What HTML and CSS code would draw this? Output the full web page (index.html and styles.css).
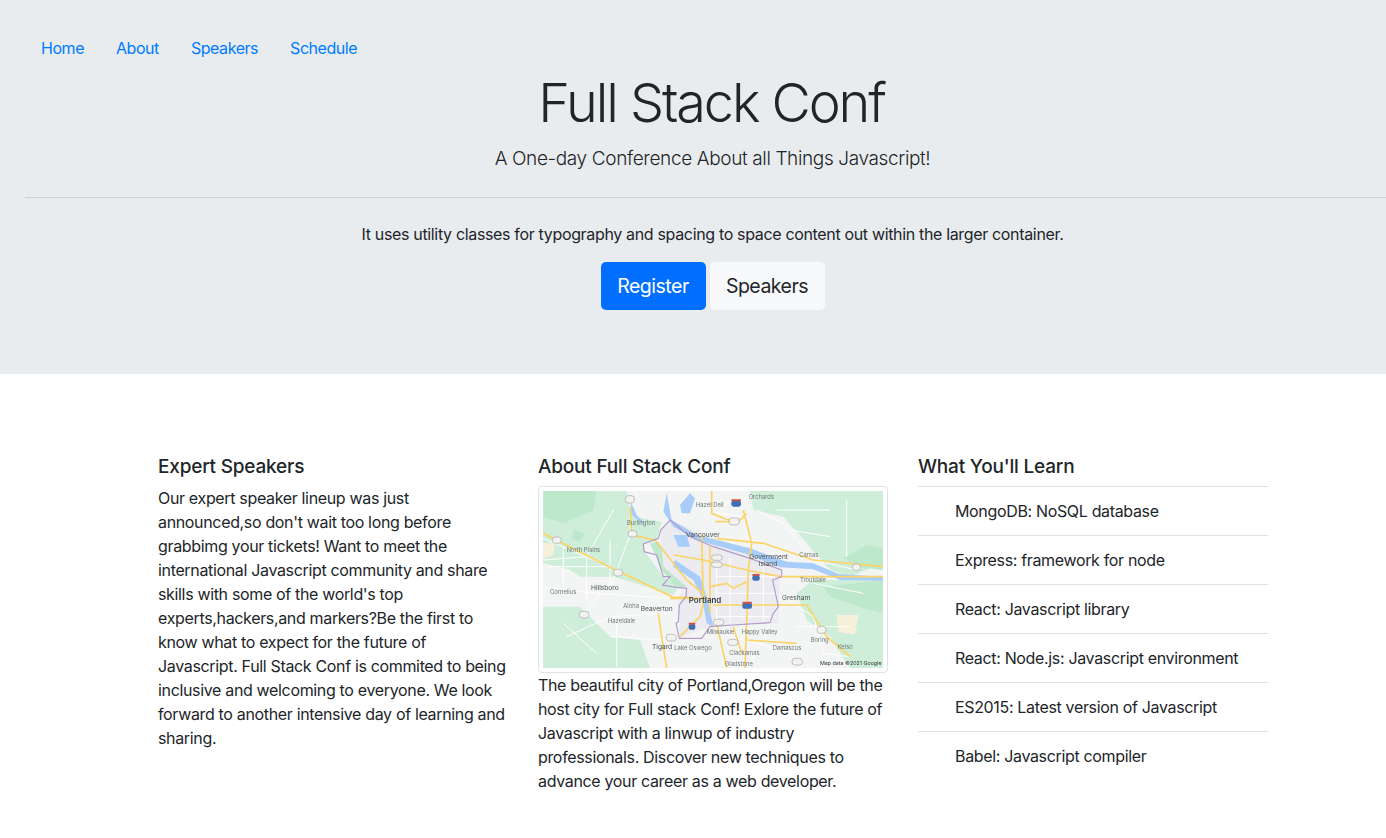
FILE: index.html
```html
<!DOCTYPE html>
<html lang="en">
<head>
<meta charset="utf-8">
<title>Full Stack Conf</title>
<link rel="stylesheet" href="styles.css">
</head>
<body>
<header class="hero">
  <nav class="nav">
    <a href="#">Home</a>
    <a href="#">About</a>
    <a href="#">Speakers</a>
    <a href="#">Schedule</a>
  </nav>
  <div class="hero-body">
    <h1>Full Stack Conf</h1>
    <p class="lead">A One-day Conference About all Things Javascript!</p>
    <hr class="rule">
    <p class="note">It uses utility classes for typography and spacing to space content out within the larger container.</p>
    <div class="actions">
      <a class="btn btn-primary" href="#">Register</a>
      <a class="btn btn-light" href="#">Speakers</a>
    </div>
  </div>
</header>
<main class="columns">
  <section>
    <h2>Expert Speakers</h2>
    <p>Our expert speaker lineup was just announced,so don't wait too long before grabbimg your tickets! Want to meet the international Javascript community and share skills with some of the world's top experts,hackers,and markers?Be the first to know what to expect for the future of Javascript. Full Stack Conf is commited to being inclusive and welcoming to everyone. We look forward to another intensive day of learning and sharing.</p>
  </section>
  <section>
    <h2>About Full Stack Conf</h2>
    <div class="thumb">
      <svg class="map" viewBox="39 33 1020 531" role="img" aria-label="Map of Portland, Oregon">
        <rect x="39" y="33" width="1020" height="531" fill="#f3f4f4"/>
        <g fill="#cfeeda">
          <path d="M39 33H290L310 110L395 125L380 180L340 190L345 215L400 290L445 320L430 345L250 290L150 290L120 270L39 250Z"/>
          <path d="M660 33H1059V250L960 290L900 270L830 190L760 110L670 90Z"/>
          <path d="M850 300H1059V564H960L900 470L830 420L800 340Z"/>
          <path d="M39 380H150L240 470L330 480L360 564H39Z"/>
        </g>
        <g fill="#bde8cb">
          <path d="M940 235L1010 195L1059 205V270L990 262Z"/>
          <path d="M360 190L385 185L440 275L470 320L440 325L395 270Z"/>
          <path d="M130 150L165 160L150 185L125 175Z"/>
          <path d="M880 320L1059 300V400L1000 385L900 350Z"/>
          <path d="M480 195L505 190L510 220L485 215Z"/>
          <path d="M705 380L735 380L730 405L705 400Z"/>
          <path d="M610 340L625 340L625 360L610 360Z"/>
          <path d="M40 33H200L190 90L100 130L40 110Z"/>
        </g>
        <path d="M39 190H75L70 225L39 235Z" fill="#f6efd9"/>
        <path d="M920 405H985L975 465L925 455Z" fill="#f6efd9"/>
        <path d="M390 150L430 125L650 210L750 270L745 430L540 440L450 470L445 350L470 320L400 260Z" fill="#ebebf0"/>
        <g fill="#a9cdf9">
          <path d="M450 75L480 40L495 55L480 100L455 100Z"/>
          <path d="M410 40L425 120L500 165L660 205L770 245L850 250L925 282L1059 290V302L930 300L850 268L750 262L650 222L500 180L430 140L400 95Z"/>
          <path d="M430 165L470 165L480 200L445 200Z"/>
          <path d="M435 240L510 290L530 350L550 440L530 430L515 350L490 300L430 260Z"/>
          <path d="M300 60L320 105L345 130L335 130L305 105Z"/>
        </g>
        <g fill="none" stroke="#fff" stroke-width="3">
          <path d="M39 175L250 265L430 355"/>
          <path d="M39 320L200 340L420 355"/>
          <path d="M160 400L250 300L300 165L300 60"/>
          <path d="M250 90L170 230L40 240"/>
          <path d="M680 90L760 130L850 240L980 270"/>
          <path d="M760 350L850 410L880 520L960 530"/>
          <path d="M740 380L700 480L650 564"/>
          <path d="M240 470L400 480L520 470"/>
          <path d="M110 470L240 410L420 400"/>
          <path d="M600 60L560 100L640 110"/>
          <path d="M850 310L1000 340"/>
          <path d="M600 470L800 520"/>
          <path d="M100 200V320M170 230V360M240 180V330M60 260H240"/>
          <path d="M560 240V430M600 230V430M700 260V425M560 290H740M560 340H740M560 410H740"/>
          <path d="M780 150L900 170M740 90L900 90M950 60V230"/>
          <path d="M100 430L200 520M260 430V560M800 440H960"/>
        </g>
        <g fill="none" stroke="#fcd465" stroke-width="5">
          <path d="M39 160L240 262L430 352L480 352"/>
          <path d="M300 80L305 165L375 180L470 300L525 345"/>
          <path d="M545 33L545 100L620 130L650 100"/>
          <path d="M555 125L620 125"/>
          <path d="M640 90L665 190L655 270L650 430L645 564"/>
          <path d="M430 225L520 240L650 270L750 290L1059 290"/>
          <path d="M515 165L520 370L510 410L450 470"/>
          <path d="M540 200L540 400"/>
          <path d="M540 320L590 310L610 325L650 305"/>
          <path d="M550 375H750L830 375L890 470L960 530"/>
          <path d="M560 175L700 190L850 240L1059 260"/>
          <path d="M385 400L395 470L410 564"/>
          <path d="M560 430L590 564"/>
          <path d="M610 440L635 520"/>
          <path d="M645 480L800 490"/>
          <path d="M420 355H530"/>
        </g>
        <path d="M421 120L392 150L385 175L340 192L342 215L380 225L400 290L420 290L398 315L440 322L470 325L468 350L448 375L445 425L438 430L448 475L515 475L540 440L610 435L720 428L730 400L745 380L728 300L755 290L755 270L660 235L550 200L480 170Z" fill="none" stroke="#b39acb" stroke-width="3.5"/>
        <g class="map-label">
          <text x="656" y="58">Orchards</text>
          <text x="498" y="82">Hazel Dell</text>
          <text x="291" y="135">Burlington</text>
          <text x="110" y="216">North Plains</text>
          <text x="60" y="342">Cornelius</text>
          <text x="280" y="385">Aloha</text>
          <text x="234" y="429">Hazeldale</text>
          <text x="808" y="232">Camas</text>
          <text x="810" y="307">Troutdale</text>
          <text x="530" y="461">Milwaukie</text>
          <text x="635" y="462">Happy Valley</text>
          <text x="433" y="511">Lake Oswego</text>
          <text x="598" y="525">Clackamas</text>
          <text x="585" y="558">Gladstone</text>
          <text x="728" y="509">Damascus</text>
          <text x="842" y="487">Boring</text>
          <text x="923" y="506">Kelso</text>
        </g>
        <g class="map-label map-label-big">
          <text x="468" y="170">Vancouver</text>
          <text x="183" y="331">Hillsboro</text>
          <text x="332" y="393">Beaverton</text>
          <text x="756" y="359">Gresham</text>
          <text x="366" y="507">Tigard</text>
          <text x="658" y="237">Government</text>
          <text x="686" y="257">Island</text>
        </g>
        <text class="map-city" x="476" y="368">Portland</text>
        <g fill="#3f6fb5">
          <rect x="604" y="62" width="29" height="18" rx="7"/>
          <rect x="667" y="286" width="22" height="16" rx="6"/>
          <rect x="637" y="369" width="29" height="17" rx="6"/>
          <rect x="476" y="432" width="20" height="17" rx="6"/>
        </g>
        <g fill="#c9534a">
          <rect x="604" y="58" width="29" height="6" rx="2"/>
          <rect x="667" y="282" width="22" height="6" rx="2"/>
          <rect x="637" y="365" width="29" height="6" rx="2"/>
          <rect x="476" y="428" width="20" height="6" rx="2"/>
        </g>
        <g fill="#f2f2ee" stroke="#a8a8a8" stroke-width="2">
          <rect x="286" y="47" width="27" height="22" rx="9"/>
          <rect x="597" y="114" width="31" height="21" rx="9"/>
          <rect x="294" y="152" width="27" height="19" rx="9"/>
          <rect x="67" y="171" width="27" height="19" rx="9"/>
          <rect x="251" y="268" width="27" height="20" rx="9"/>
          <rect x="148" y="394" width="29" height="20" rx="9"/>
          <rect x="408" y="463" width="31" height="20" rx="9"/>
          <rect x="967" y="252" width="25" height="19" rx="9"/>
          <rect x="861" y="439" width="27" height="21" rx="9"/>
          <rect x="593" y="478" width="31" height="18" rx="9"/>
          <rect x="786" y="535" width="31" height="20" rx="9"/>
          <rect x="550" y="418" width="31" height="18" rx="9"/>
          <rect x="545" y="225" width="31" height="16" rx="7"/>
          <rect x="545" y="246" width="31" height="16" rx="7"/>
        </g>
        <text class="map-credit" x="870" y="556">Map data ©2021 Google</text>
      </svg>
    </div>
    <p>The beautiful city of Portland,Oregon will be the host city for Full stack Conf! Exlore the future of Javascript with a linwup of industry professionals. Discover new techniques to advance your career as a web developer.</p>
  </section>
  <section>
    <h2>What You'll Learn</h2>
    <ul class="topics">
      <li>MongoDB: NoSQL database</li>
      <li>Express: framework for node</li>
      <li>React: Javascript library</li>
      <li>React: Node.js: Javascript environment</li>
      <li>ES2015: Latest version of Javascript</li>
      <li>Babel: Javascript compiler</li>
    </ul>
  </section>
</main>
</body>
</html>
```

FILE: styles.css
```css
* {
  box-sizing: border-box;
}

html,
body {
  overflow-x: hidden;
}

body {
  margin: 0;
  font-family: Inter, "Liberation Sans", sans-serif;
  font-size: 16px;
  line-height: 24px;
  letter-spacing: -0.34px;
  color: #212529;
  background: #fff;
}

.hero {
  height: 374px;
  padding: 32px 0 0 25px;
  background: #e9ecef;
  overflow: hidden;
}

.nav {
  display: flex;
  height: 32px;
  letter-spacing: -0.45px;
}

.nav a {
  padding: 4px 16px;
  color: #007bff;
  text-decoration: none;
}

.hero-body {
  width: 1375px;
  text-align: center;
}

h1 {
  margin: 0;
  padding: 5px 2px 0 0;
  font-size: 54px;
  line-height: 67px;
  font-weight: 300;
  letter-spacing: -2.1px;
}

.lead {
  margin: 8px 0 0;
  font-size: 19px;
  line-height: 30px;
  font-weight: 300;
  letter-spacing: -0.37px;
}

.rule {
  margin: 23px 0 0;
  border: 0;
  border-top: 1px solid #ced1d5;
}

.note {
  margin: 24px 0 0;
}

.actions {
  display: flex;
  justify-content: center;
  gap: 4px;
  margin-top: 16px;
}

.btn {
  display: block;
  padding: 8px 0;
  height: 48px;
  font-size: 19.5px;
  line-height: 32px;
  letter-spacing: -0.5px;
  border-radius: 5px;
  text-decoration: none;
}

.btn-primary {
  width: 105px;
  background: #006fff;
  color: #fff;
}

.btn-light {
  width: 115px;
  background: #f8f9fa;
  color: #212529;
}

.columns {
  display: grid;
  grid-template-columns: repeat(3, 350px);
  column-gap: 30px;
  padding: 81px 0 0 158px;
}

h2 {
  margin: 0 0 7px;
  font-size: 19px;
  line-height: 24px;
  font-weight: 500;
  letter-spacing: -0.2px;
}

.columns p {
  margin: 0;
}

.thumb {
  height: 187px;
  padding: 4px;
  border: 1px solid #dee2e6;
  border-radius: 4px;
  background: #fff;
}

.map {
  display: block;
  width: 340px;
  height: 177px;
  filter: blur(0.45px);
}

.map-label text {
  font-size: 17.5px;
  fill: #6f7a78;
  letter-spacing: 0;
}

.map-label-big text {
  font-size: 20px;
  fill: #4a5250;
}

.map-city {
  font-size: 24px;
  font-weight: 600;
  fill: #3c4043;
  letter-spacing: 0;
}

.map-credit {
  font-size: 16px;
  fill: #333;
  letter-spacing: 0;
}

.topics {
  list-style: none;
  margin: 0;
  padding: 0;
}

.topics li {
  padding: 12px 20px 12px 37px;
  border-top: 1px solid #dee2e6;
}
```
